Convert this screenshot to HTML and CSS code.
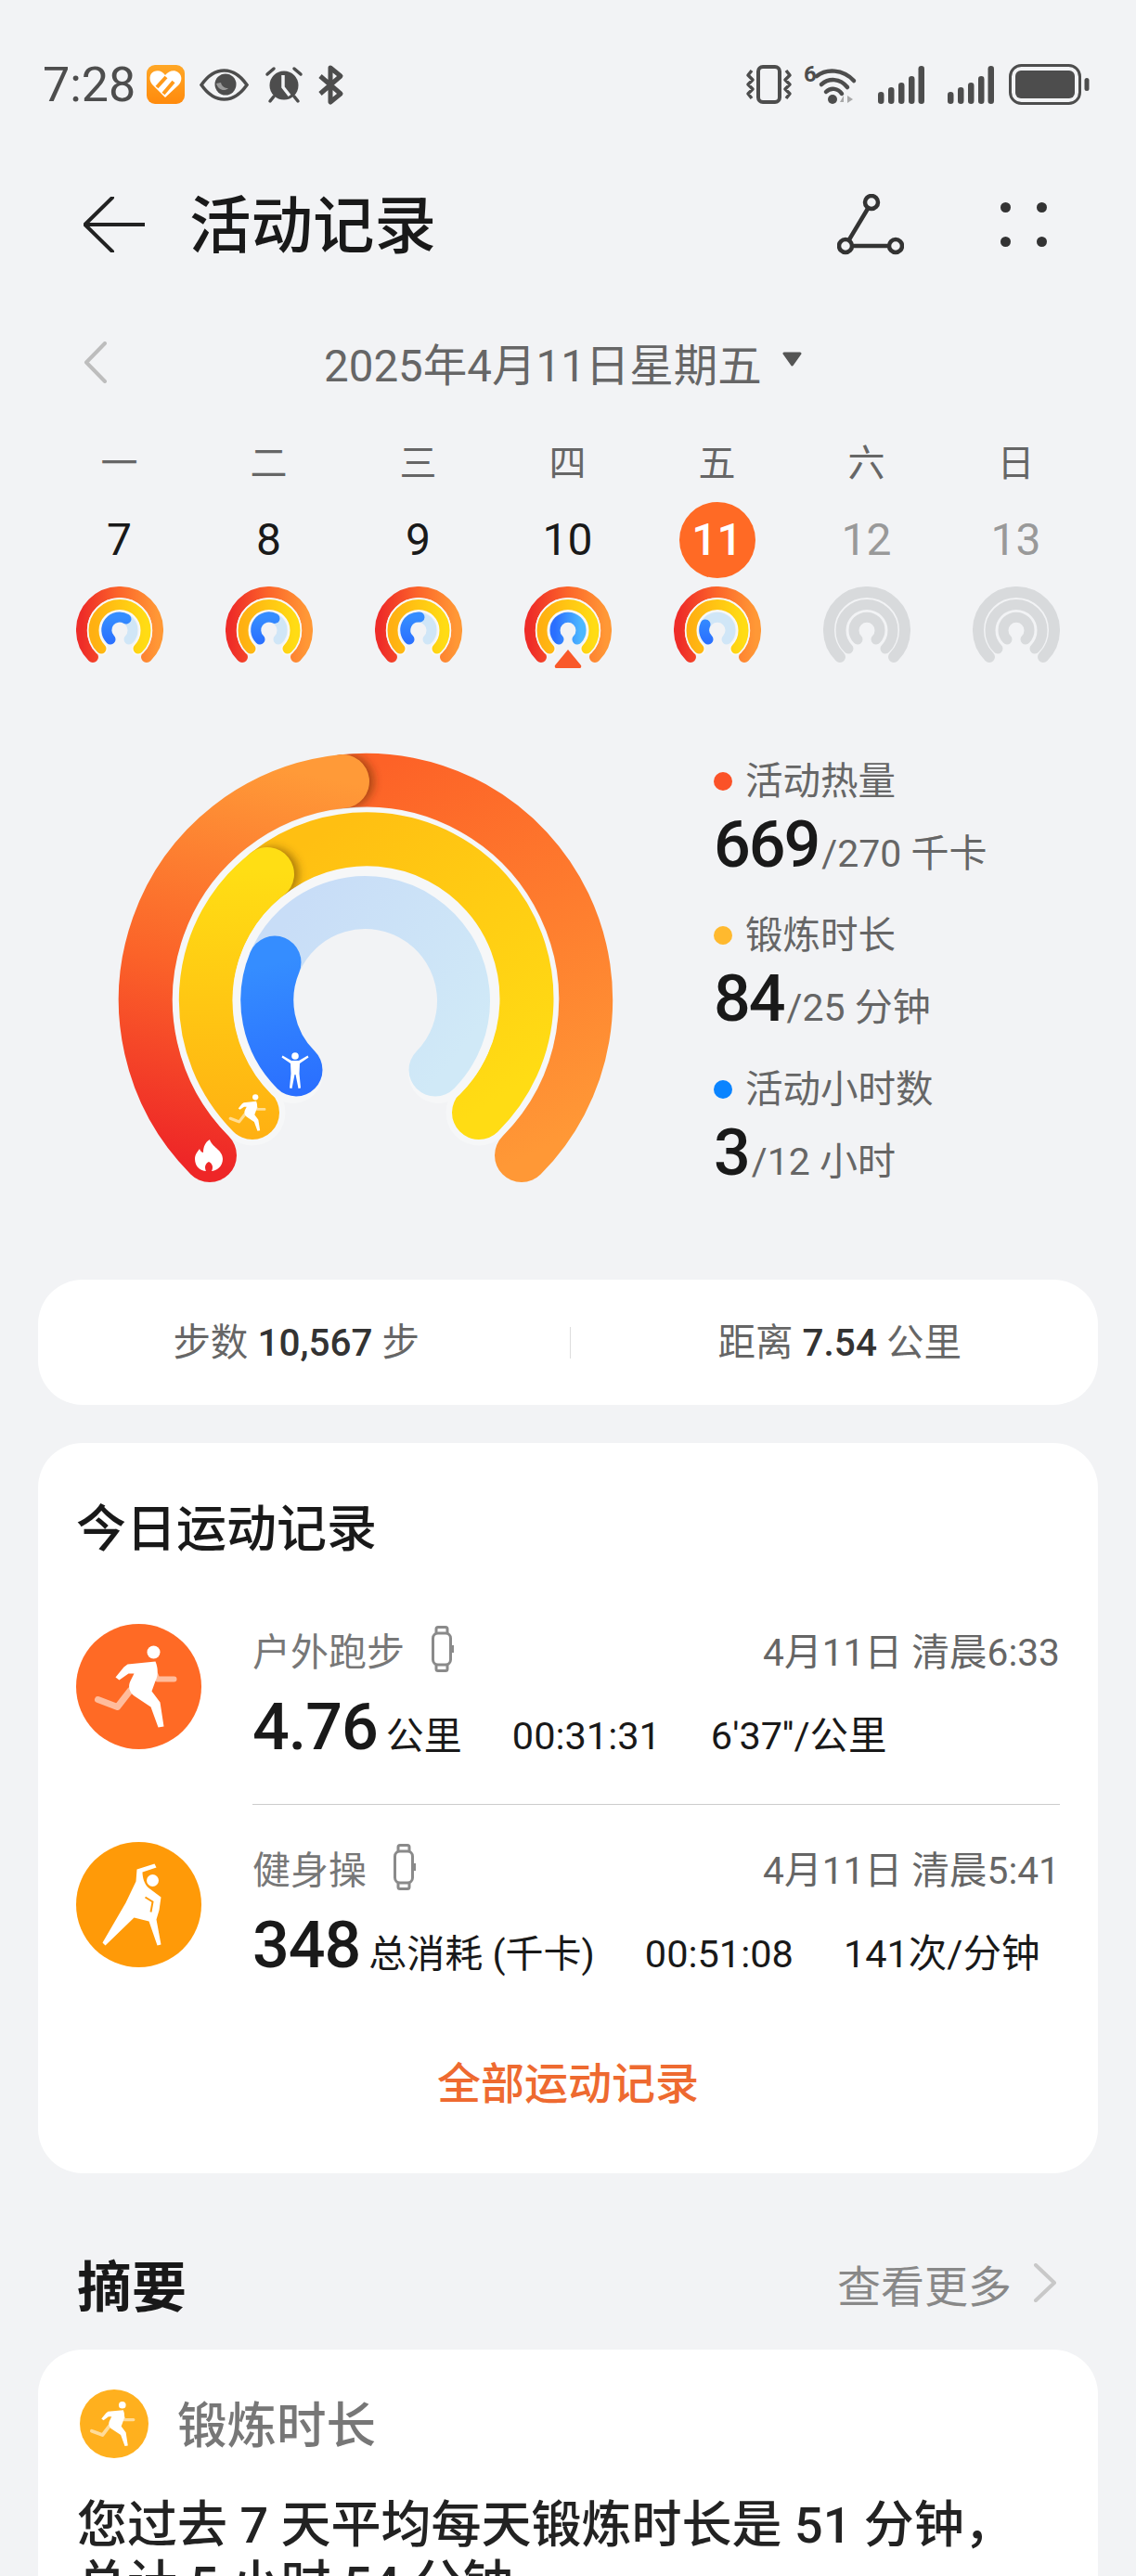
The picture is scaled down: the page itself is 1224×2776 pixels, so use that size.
FILE: index.html
```html
<!DOCTYPE html>
<html lang="zh-CN">
<head>
    <meta charset="UTF-8">
    <meta name="viewport" content="width=device-width, initial-scale=1.0">
    <title>活动记录</title>
    <link rel="stylesheet" href="styles.css">
</head>
<body>
    <!-- shared gradients and shapes -->
    <svg class="defs" aria-hidden="true">
        <defs>
            <linearGradient id="outerTrack" gradientUnits="userSpaceOnUse" x1="-20" y1="-237" x2="170" y2="170">
                <stop offset="0" stop-color="#FD6227"/>
                <stop offset="1" stop-color="#FF9836"/>
            </linearGradient>
            <linearGradient id="outerDone" gradientUnits="userSpaceOnUse" x1="-30" y1="-237" x2="-120" y2="190">
                <stop offset="0" stop-color="#FF9A38"/>
                <stop offset=".52" stop-color="#FB6329"/>
                <stop offset="1" stop-color="#EE2627"/>
            </linearGradient>
            <linearGradient id="midTrack" gradientUnits="userSpaceOnUse" x1="-60" y1="-172" x2="120" y2="120">
                <stop offset="0" stop-color="#FFBF12"/>
                <stop offset="1" stop-color="#FFDC14"/>
            </linearGradient>
            <linearGradient id="midDone" gradientUnits="userSpaceOnUse" x1="-100" y1="-140" x2="-110" y2="150">
                <stop offset="0" stop-color="#FFDE14"/>
                <stop offset="1" stop-color="#FFB012"/>
            </linearGradient>
            <linearGradient id="innerTrack" gradientUnits="userSpaceOnUse" x1="-90" y1="-80" x2="90" y2="70">
                <stop offset="0" stop-color="#C8DDF7"/>
                <stop offset="1" stop-color="#D0E9F7"/>
            </linearGradient>
            <linearGradient id="innerDone" gradientUnits="userSpaceOnUse" x1="-100" y1="-40" x2="-70" y2="100">
                <stop offset="0" stop-color="#358DFF"/>
                <stop offset="1" stop-color="#2A6FFF"/>
            </linearGradient>
            <linearGradient id="miniOuter" gradientUnits="userSpaceOnUse" x1="-41" y1="10" x2="41" y2="10">
                <stop offset="0" stop-color="#EE2C28"/>
                <stop offset=".5" stop-color="#FC662A"/>
                <stop offset="1" stop-color="#FF9836"/>
            </linearGradient>
            <linearGradient id="miniMid" gradientUnits="userSpaceOnUse" x1="-28" y1="10" x2="28" y2="10">
                <stop offset="0" stop-color="#FFB012"/>
                <stop offset="1" stop-color="#FFDC14"/>
            </linearGradient>
            <linearGradient id="miniBlue" gradientUnits="userSpaceOnUse" x1="-10" y1="-14" x2="-10" y2="14">
                <stop offset="0" stop-color="#358DFF"/>
                <stop offset="1" stop-color="#2A6FFF"/>
            </linearGradient>
            <linearGradient id="miniBlueFull" gradientUnits="userSpaceOnUse" x1="-14" y1="0" x2="14" y2="0">
                <stop offset="0" stop-color="#2A6FFF"/>
                <stop offset="1" stop-color="#4DB8FF"/>
            </linearGradient>
            <linearGradient id="appIcon" x1="0" y1="0" x2="0" y2="1">
                <stop offset="0" stop-color="#FFA726"/>
                <stop offset="1" stop-color="#FF8A0C"/>
            </linearGradient>
            <filter id="capBlur" filterUnits="userSpaceOnUse" x="-274" y="-273" width="548" height="486">
                <feGaussianBlur stdDeviation="5"/>
            </filter>
            <clipPath id="outerClip"><circle r="266"/></clipPath>
            <clipPath id="midClip"><circle r="201.500"/></clipPath>

            <g id="miniRings">
                <path d="M-29 29A41 41 0 1 1 29 29" fill="none" stroke="url(#miniOuter)" stroke-width="12" stroke-linecap="round"/>
                <path d="M-20 20A28 28 0 1 1 20 20" fill="none" stroke="#F8F9F9" stroke-width="14.5" stroke-linecap="round"/>
                <path d="M-20 20A28 28 0 1 1 20 20" fill="none" stroke="url(#miniMid)" stroke-width="11" stroke-linecap="round"/>
                <path d="M-10 10A14 14 0 1 1 10 10" fill="none" stroke="#D0E6F7" stroke-width="11" stroke-linecap="round"/>
            </g>
            <g id="miniGray" fill="none" stroke="#D8DADC" stroke-linecap="round">
                <path d="M-29 29A41 41 0 1 1 29 29" stroke-width="12"/>
                <path d="M-20 20A28 28 0 1 1 20 20" stroke-width="11"/>
                <path d="M-10 10A14 14 0 1 1 10 10" stroke-width="11"/>
            </g>
            <g id="runnerBody">
                <circle cx="16" cy="-37" r="7" fill="#fff"/>
                <path d="M18 -13L20 -8L38 -8" fill="none" stroke="#fff" stroke-opacity=".55" stroke-width="6" stroke-linecap="round" stroke-linejoin="round"/>
                <path d="M-9 4L-23 22L-44 14" fill="none" stroke="#fff" stroke-opacity=".55" stroke-width="7" stroke-linecap="round" stroke-linejoin="round"/>
                <path d="M-12 -24L18 -27C21 -20 21 -12 18 -6L14 5L23 17L27 43L21 44L13 22L-5 10C-10 6 -12 0 -9 -6L-5 -14L-11 -14L-21 -7L-25 -10L-16 -21Z" fill="#fff"/>
            </g>
            <g id="watchBand" fill="none" stroke="#8A8A8A" stroke-width="3">
                <path d="M5 8V3.5A2 2 0 0 1 7 1.5H15A2 2 0 0 1 17 3.5V8"/>
                <rect x="1.5" y="8" width="19" height="34" rx="5.5"/>
                <path d="M5 42V46.5A2 2 0 0 0 7 48.5H15A2 2 0 0 0 17 46.5V42"/>
            </g>
        </defs>
    </svg>

    <div class="status">
        <span class="clock">7:28</span>
        <svg class="st-app" viewBox="0 0 41 42">
            <rect width="41" height="42" rx="9" fill="url(#appIcon)"/>
            <path d="M20 35L6 21C2 16 3 9 8 7C13 5 17 7 20 11C24 6 30 5 34 8C39 12 38 18 34 22Z" fill="#fff"/>
            <path d="M11 24L21 13M18 31L29 18" stroke="#FF9A1A" stroke-width="4" fill="none"/>
        </svg>
        <svg class="st-eye" viewBox="0 0 53 35">
            <path d="M2 17.5C10 6 18 2 26.5 2C35 2 43 6 51 17.5C43 29 35 33 26.5 33C18 33 10 29 2 17.5Z" fill="none" stroke="#4D4D4D" stroke-width="3.5"/>
            <circle cx="28" cy="17" r="11.5" fill="#4D4D4D"/>
            <path d="M18 16C20 23 27 25 31 21C27 21 24 19 23 15Z" fill="#9A9A9A"/>
        </svg>
        <svg class="st-alarm" viewBox="0 0 42 40">
            <circle cx="21" cy="21" r="15.5" fill="#4D4D4D"/>
            <path d="M3 9L10 3M32 3L39 9M6 38L10 33M36 38L32 33" stroke="#4D4D4D" stroke-width="3.5" stroke-linecap="round"/>
            <path d="M20 10V23L27 32" fill="none" stroke="#F2F3F5" stroke-width="3.5"/>
        </svg>
        <svg class="st-bt" viewBox="0 0 28 41">
            <path d="M3 11L25 30L14 39V2L25 11L3 30" fill="none" stroke="#4D4D4D" stroke-width="5" stroke-linejoin="round"/>
        </svg>
        <svg class="st-vib" viewBox="0 0 49 42">
            <rect x="13" y="2" width="23" height="38" rx="5" fill="none" stroke="#4D4D4D" stroke-width="4"/>
            <path d="M6 6L2 11L7 16L2 21L7 26L2 31L6 36M43 6L47 11L42 16L47 21L42 26L47 31L43 36" fill="none" stroke="#4D4D4D" stroke-width="3.5" stroke-linejoin="round"/>
        </svg>
        <svg class="st-wifi" viewBox="0 0 57 42">
            <text x="0" y="18" class="wifi-six">6</text>
            <path d="M14 12C24 4 42 4 54 17M19 21C27 14 39 14 47 24M24 29C29 24 37 25 41 31" fill="none" stroke="#4D4D4D" stroke-width="4.5" stroke-linecap="round"/>
            <circle cx="31" cy="37" r="5" fill="#4D4D4D"/>
            <path d="M43 40V33L39 40ZM47 33L53 37L47 41Z" fill="#A8A8A8"/>
        </svg>
        <svg class="st-sig" viewBox="0 0 50 41">
            <rect x="0" y="28" width="6.5" height="13" rx="3.2"/>
            <rect x="11" y="23" width="6.5" height="18" rx="3.2"/>
            <rect x="22" y="18" width="6.5" height="23" rx="3.2"/>
            <rect x="33" y="11" width="6.5" height="30" rx="3.2"/>
            <rect x="43.5" y="0" width="6.5" height="41" rx="3.2"/>
        </svg>
        <svg class="st-sig2" viewBox="0 0 50 41">
            <rect x="0" y="28" width="6.5" height="13" rx="3.2"/>
            <rect x="11" y="23" width="6.5" height="18" rx="3.2"/>
            <rect x="22" y="18" width="6.5" height="23" rx="3.2"/>
            <rect x="33" y="11" width="6.5" height="30" rx="3.2"/>
            <rect x="43.5" y="0" width="6.5" height="41" rx="3.2"/>
        </svg>
        <svg class="st-batt" viewBox="0 0 87 44">
            <rect x="1.5" y="1.5" width="75" height="41" rx="12" fill="none" stroke="#4D4D4D" stroke-width="3"/>
            <rect x="7" y="7" width="64" height="30" rx="6" fill="#4D4D4D"/>
            <rect x="81.5" y="15" width="5" height="14" rx="2.5" fill="#4D4D4D"/>
        </svg>
    </div>

    <div class="nav">
        <svg class="nav-back" viewBox="0 0 66 60">
            <path d="M31 1L1.5 30L31 59M1.5 30H66" fill="none" stroke="#222" stroke-width="4" stroke-linecap="round" stroke-linejoin="round"/>
        </svg>
        <h1 class="nav-title">活动记录</h1>
        <svg class="nav-share" viewBox="0 0 72 66">
            <g fill="none" stroke="#333" stroke-width="4.5">
                <circle cx="37" cy="9" r="7"/>
                <circle cx="9" cy="56" r="7"/>
                <circle cx="63" cy="56" r="7"/>
                <path d="M33.5 15L12.500 50M16 56H56"/>
            </g>
        </svg>
        <div class="nav-dots"><i></i><i></i><i></i><i></i></div>
    </div>

    <div class="date-row">
        <svg class="date-prev" viewBox="0 0 25 45">
            <path d="M23 2L3 22.500L23 43" fill="none" stroke="#BDBDBD" stroke-width="4" stroke-linecap="round" stroke-linejoin="round"/>
        </svg>
        <span class="date-text">2025年4月11日星期五</span>
        <svg class="date-caret" viewBox="0 0 23 17">
            <path d="M3 3H20L11.500 15Z" fill="#555" stroke="#555" stroke-width="3" stroke-linejoin="round"/>
        </svg>
    </div>

    <div class="week">
        <div class="day">
            <span class="day-name">一</span><span class="day-num">7</span>
            <svg class="mini" viewBox="-47 -47 94 94">
                <use href="#miniRings"/>
                <path d="M-10 10A14 14 0 0 1 7 -12" fill="none" stroke="url(#miniBlue)" stroke-width="11" stroke-linecap="round"/>
            </svg>
        </div>
        <div class="day">
            <span class="day-name">二</span><span class="day-num">8</span>
            <svg class="mini" viewBox="-47 -47 94 94">
                <use href="#miniRings"/>
                <path d="M-10 10A14 14 0 0 1 6 -12.600" fill="none" stroke="url(#miniBlue)" stroke-width="11" stroke-linecap="round"/>
            </svg>
        </div>
        <div class="day">
            <span class="day-name">三</span><span class="day-num">9</span>
            <svg class="mini" viewBox="-47 -47 94 94">
                <use href="#miniRings"/>
                <path d="M-10 10A14 14 0 0 1 1 -14" fill="none" stroke="url(#miniBlue)" stroke-width="11" stroke-linecap="round"/>
            </svg>
        </div>
        <div class="day">
            <span class="day-name">四</span><span class="day-num">10</span>
            <svg class="mini" viewBox="-47 -47 94 94">
                <use href="#miniRings"/>
                <path d="M-10 10A14 14 0 1 1 10 10" fill="none" stroke="url(#miniBlueFull)" stroke-width="11" stroke-linecap="round"/>
                <path d="M0 21L-14 38A2 2 0 0 0 -12 41H12A2 2 0 0 0 14 38Z" fill="#F9592A"/>
            </svg>
        </div>
        <div class="day">
            <span class="day-name">五</span><span class="day-num day-num-on">11</span>
            <svg class="mini" viewBox="-47 -47 94 94">
                <use href="#miniRings"/>
                <path d="M-10 10A14 14 0 0 1 -13 -6" fill="none" stroke="url(#miniBlue)" stroke-width="11" stroke-linecap="round"/>
            </svg>
        </div>
        <div class="day">
            <span class="day-name">六</span><span class="day-num day-num-off">12</span>
            <svg class="mini" viewBox="-47 -47 94 94"><use href="#miniGray"/></svg>
        </div>
        <div class="day">
            <span class="day-name">日</span><span class="day-num day-num-off">13</span>
            <svg class="mini" viewBox="-47 -47 94 94"><use href="#miniGray"/></svg>
        </div>
    </div>

    <div class="summary">
        <svg class="gauge" viewBox="-274 -273 548 486">
            <g fill="none" stroke-linecap="round">
                <path d="M-25 -236A237 237 0 0 1 168 167" stroke="url(#outerTrack)" stroke-width="58"/>
                <g clip-path="url(#outerClip)">
                    <circle cx="-20" cy="-236" r="29" fill="#5A2A00" fill-opacity=".5" filter="url(#capBlur)"/>
                </g>
                <path d="M-168 167A237 237 0 0 1 -25 -236" stroke="url(#outerDone)" stroke-width="58"/>

                <path d="M-122 121A172 172 0 1 1 122 121" stroke="#F6F7F8" stroke-width="71"/>
                <path d="M-106 -136A172 172 0 0 1 122 121" stroke="url(#midTrack)" stroke-width="58"/>
                <g clip-path="url(#midClip)">
                    <circle cx="-101" cy="-136" r="29" fill="#5A3A00" fill-opacity=".5" filter="url(#capBlur)"/>
                </g>
                <path d="M-122 121A172 172 0 0 1 -106 -136" stroke="url(#midDone)" stroke-width="58"/>

                <path d="M-78.500 78.500A111 111 0 1 1 78.500 78.500" stroke="#F6F7F8" stroke-width="65"/>
                <path d="M-98 -41A106 106 0 1 1 75 75" stroke="url(#innerTrack)" stroke-width="57"/>
                <path d="M-75 75A106 106 0 0 1 -98 -41" stroke="url(#innerDone)" stroke-width="57"/>
            </g>
            <path transform="translate(-169 167)" d="M1 -17C3 -9 15 -6 15 4C15 12 8 17 3 17C5 13 4 9 0 7C-4 9 -5 13 -3 17C-9 17 -15 12 -15 4C-15 -1 -12 -4 -10 -7C-9 -4 -7 -3 -6 -3C-6 -9 -4 -14 1 -17Z" fill="#fff"/>
            <use href="#runnerBody" transform="translate(-126 121) scale(.45)"/>
            <circle cx="-76" cy="60" r="3.800" fill="#fff"/>
            <path transform="translate(-76 76)" d="M-14.500 -14.500L-13.500 -16.500L-4 -11H4L13.500 -16.500L14.500 -14.500L5 -8L4.500 3L6 18.500L3.500 19L.5 4H-.5L-3.500 19L-6 18.500L-4.500 3L-5 -8Z" fill="#fff"/>
        </svg>

        <div class="goals">
            <div class="goal">
                <div class="goal-label"><i class="dot dot-red"></i>活动热量</div>
                <div class="goal-value"><b>669</b><span>/270 千卡</span></div>
            </div>
            <div class="goal">
                <div class="goal-label"><i class="dot dot-amber"></i>锻炼时长</div>
                <div class="goal-value"><b>84</b><span>/25 分钟</span></div>
            </div>
            <div class="goal">
                <div class="goal-label"><i class="dot dot-blue"></i>活动小时数</div>
                <div class="goal-value"><b>3</b><span>/12 小时</span></div>
            </div>
        </div>
    </div>

    <div class="card steps">
        <div class="steps-half steps-left">步数 <b>10,567</b> 步</div>
        <div class="steps-half steps-right">距离 <b>7.54</b> 公里</div>
    </div>

    <div class="card records">
        <h2 class="records-title">今日运动记录</h2>

        <div class="record">
            <svg class="record-icon" viewBox="-67.500 -67.500 135 135">
                <circle r="67.500" fill="#FF6A25"/>
                <use href="#runnerBody"/>
            </svg>
            <div class="record-body record-first">
                <div class="record-top">
                    <span class="record-name">户外跑步</span>
                    <svg class="watch" viewBox="0 0 24 50"><use href="#watchBand"/><rect x="21.500" y="21" width="2.500" height="8" fill="#8A8A8A"/></svg>
                    <span class="record-time">4月11日 清晨6:33</span>
                </div>
                <div class="record-data">
                    <b>4.76</b><span class="unit">公里</span>
                    <span class="metric">00:31:31</span>
                    <span class="metric">6'37''/公里</span>
                </div>
            </div>
        </div>

        <div class="record">
            <svg class="record-icon" viewBox="-67.500 -67.500 135 135">
                <circle r="67.500" fill="#FF9A08"/>
                <circle cx="15" cy="-26" r="6.500" fill="#fff"/>
                <path d="M17 -44L19 -40L4 -35C4 -28 7 -20 12 -17L24 -8L22 6L19 16L24 43L20 44L11 18L-5 14L-36 44L-39 41L-14 -2L-3 -25L-2 -38Z" fill="#fff"/>
                <path d="M7 -8L15 -3L13 8" fill="none" stroke="#FF9A08" stroke-width="2"/>
            </svg>
            <div class="record-body">
                <div class="record-top">
                    <span class="record-name">健身操</span>
                    <svg class="watch" viewBox="0 0 24 50"><use href="#watchBand"/><rect x="21.500" y="21" width="2.500" height="8" fill="#8A8A8A"/></svg>
                    <span class="record-time">4月11日 清晨5:41</span>
                </div>
                <div class="record-data">
                    <b>348</b><span class="unit">总消耗 (千卡)</span>
                    <span class="metric">00:51:08</span>
                    <span class="metric">141次/分钟</span>
                </div>
            </div>
        </div>

        <div class="records-all">全部运动记录</div>
    </div>

    <div class="digest-head">
        <h2 class="digest-title">摘要</h2>
        <span class="digest-more">查看更多</span>
        <svg class="digest-arrow" viewBox="0 0 26 42">
            <path d="M3 2L23 21L3 40" fill="none" stroke="#C8C8C8" stroke-width="4" stroke-linecap="round" stroke-linejoin="round"/>
        </svg>
    </div>

    <div class="card digest">
        <div class="digest-label">
            <svg class="digest-icon" viewBox="-67.500 -67.500 135 135">
                <circle r="67.500" fill="#FFB01E"/>
                <use href="#runnerBody"/>
            </svg>
            <span class="digest-name">锻炼时长</span>
        </div>
        <p class="digest-text">您过去 7 天平均每天锻炼时长是 51 分钟，<br>总计 5 小时 54 分钟</p>
    </div>
</body>
</html>
```

FILE: styles.css
```css
* {
    margin: 0;
    padding: 0;
    box-sizing: border-box;
}

html, body {
    height: 2776px;
    overflow: hidden;
}

body {
    background-color: #F2F3F5;
    color: #191919;
    font-family: Roboto, "Noto Sans CJK SC", sans-serif;
}

.defs {
    display: block;
    width: 0;
    height: 0;
}

/* status bar */
.status {
    display: flex;
    align-items: center;
    height: 182px;
    padding-left: 46px;
}

.clock {
    width: 101px;
    margin-right: 11px;
    font-size: 52px;
    color: #4D4D4D;
}

.status svg {
    flex: none;
    fill: #4D4D4D;
    overflow: visible;
}

.st-app { width: 41px; height: 42px; margin-right: 16px; }
.st-eye { width: 53px; height: 35px; margin-right: 17px; }
.st-alarm { width: 42px; height: 40px; margin-right: 15px; }
.st-bt { width: 28px; height: 41px; margin-right: 434px; }
.st-vib { width: 49px; height: 42px; margin-right: 13px; }
.st-wifi { width: 57px; height: 42px; margin-right: 23px; }
.st-sig { width: 50px; height: 41px; margin-right: 25px; }
.st-sig2 { width: 50px; height: 41px; margin-right: 16px; }
.st-batt { width: 87px; height: 44px; }

.wifi-six {
    font-family: Roboto, sans-serif;
    font-size: 24px;
    font-weight: 700;
    fill: #4D4D4D;
}

/* title row */
.nav {
    display: flex;
    align-items: center;
    height: 120px;
    padding: 0 96px 0 90px;
}

.nav-back {
    width: 66px;
    height: 60px;
    margin-right: 48px;
}

.nav-title {
    padding-top: 3px;
    font-size: 66.500px;
    font-weight: 500;
    line-height: 120px;
}

.nav-share {
    width: 72px;
    height: 66px;
    margin-left: auto;
    margin-right: 104px;
}

.nav-dots {
    display: grid;
    grid-template-columns: 11px 11px;
    gap: 26px 28px;
}

.nav-dots i {
    width: 11px;
    height: 11px;
    border-radius: 50%;
    background-color: #333;
}

/* date + week strip */
.date-row {
    display: flex;
    align-items: center;
    height: 100px;
    margin-top: 38px;
    padding-left: 90px;
}

.date-prev {
    width: 25px;
    height: 45px;
    margin-right: 234px;
}

.date-text {
    font-size: 47.500px;
    color: #666;
    margin-right: 21px;
}

.date-caret {
    width: 23px;
    height: 17px;
    margin-top: -8px;
}

.week {
    display: grid;
    grid-template-columns: repeat(7, 161px);
    margin-top: 30px;
    padding-left: 48px;
}

.day {
    display: flex;
    flex-direction: column;
    align-items: center;
}

.day-name {
    height: 60px;
    font-size: 40px;
    line-height: 60px;
    color: #666;
}

.day-num {
    width: 82px;
    height: 82px;
    margin: 11px 0 9px;
    border-radius: 50%;
    font-size: 48px;
    line-height: 82px;
    text-align: center;
}

.day-num-on {
    background-color: #FF6A25;
    color: #fff;
    font-weight: 500;
}

.day-num-off {
    color: #999;
}

.mini {
    display: block;
    width: 94px;
    height: 94px;
}

/* rings + goals */
.summary {
    display: flex;
    height: 486px;
    margin-top: 79px;
    padding-left: 120px;
}

.gauge {
    display: block;
    width: 548px;
    height: 486px;
}

.goals {
    margin-left: 101px;
    padding-top: 12px;
}

.goal {
    height: 166px;
}

.goal-label {
    display: flex;
    align-items: center;
    height: 50px;
    font-size: 40.500px;
    line-height: 50px;
    color: #666;
}

.dot {
    width: 20px;
    height: 20px;
    margin-right: 14px;
    border-radius: 50%;
}

.goal-value {
    display: flex;
    align-items: baseline;
    height: 80px;
    margin-top: 3px;
}

.dot-red { background-color: #FB5228; }
.dot-amber { background-color: #FFB92E; }
.dot-blue { background-color: #0A84FF; }

.goal-value b {
    font-size: 70px;
    font-weight: 500;
    line-height: 80px;
    letter-spacing: -2px;
}

.goal-value span {
    margin-left: 3px;
    font-size: 41px;
    color: #666;
}

/* white cards */
.card {
    margin: 0 41px;
    border-radius: 48px;
    background-color: #fff;
}

.steps {
    display: flex;
    align-items: center;
    height: 135px;
    margin-top: 88px;
}

.steps-half {
    flex: 1;
    height: 34px;
    font-size: 40.500px;
    line-height: 34px;
    color: #666;
    text-align: center;
    white-space: nowrap;
}

.steps-half b {
    font-weight: 500;
    color: #333;
}

.steps-left {
    padding-right: 16px;
    border-right: 1px solid #DDD;
}

.steps-right {
    padding-left: 12px;
}

.records {
    height: 787px;
    margin-top: 41px;
    padding: 59px 41px 0;
}

.records-title {
    font-size: 54px;
    font-weight: 500;
    line-height: 70px;
}

.record {
    display: flex;
    gap: 55px;
}

.records-title + .record {
    margin-top: 65px;
}

.record-icon {
    flex: none;
    display: block;
    width: 135px;
    height: 135px;
    margin-top: 1px;
}

.record-body {
    flex: 1;
}

.record-first {
    height: 196px;
    border-bottom: 1px solid #CCC;
    margin-bottom: 39px;
}

.record-top {
    display: flex;
    align-items: center;
    height: 60px;
    margin-top: -2px;
}

.record-name {
    font-size: 41px;
    color: #777;
}

.watch {
    width: 24px;
    height: 50px;
    margin-left: 29px;
}

.record-time {
    margin-left: auto;
    font-size: 40.700px;
    color: #666;
}

.record-data {
    display: flex;
    align-items: baseline;
    height: 90px;
    margin-top: 9px;
    white-space: nowrap;
}

.record-data b {
    font-size: 70px;
    font-weight: 500;
    line-height: 90px;
    letter-spacing: -1px;
}

.unit {
    margin-left: 9px;
    font-size: 41px;
}

.metric {
    margin-left: 54px;
    font-size: 41.500px;
}

.records-all {
    margin-top: 65px;
    font-size: 47px;
    font-weight: 500;
    line-height: 80px;
    color: #EE6A30;
    text-align: center;
}

/* digest */
.digest-head {
    display: flex;
    align-items: center;
    height: 80px;
    margin-top: 78px;
    padding: 0 85px 0 83px;
}

.digest-title {
    font-size: 59px;
    font-weight: 700;
}

.digest-more {
    margin-left: auto;
    margin-right: 23px;
    font-size: 47px;
    color: #888;
}

.digest-arrow {
    width: 26px;
    height: 42px;
}

.digest {
    height: 300px;
    margin-top: 32px;
    padding: 43px 42px 0;
}

.digest-label {
    display: flex;
    align-items: center;
    height: 74px;
    margin-left: 3px;
    font-size: 53.500px;
    font-weight: 500;
    color: #777;
}

.digest-icon {
    width: 74px;
    height: 74px;
    margin-right: 31px;
}

.digest-name {
    padding-bottom: 5px;
}

.digest-text {
    margin-top: 41px;
    font-size: 54px;
    font-weight: 500;
    line-height: 64px;
    color: #222;
    white-space: nowrap;
}
```
